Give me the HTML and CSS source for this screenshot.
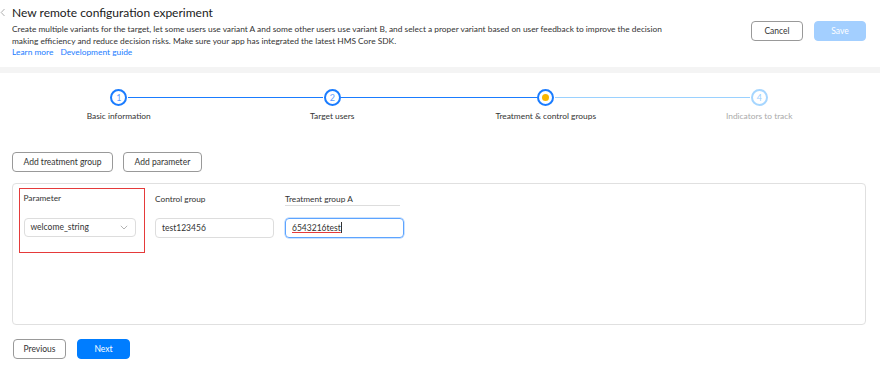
FILE: index.html
```html
<!DOCTYPE html>
<html lang="en">
<head>
  <meta charset="UTF-8">
  <meta name="viewport" content="width=device-width, initial-scale=1.0">
  <title>New remote configuration experiment</title>

  <!-- Styles -->
  <link rel="stylesheet" href="styles.css">

</head>

<body>

<!-- Page header -->
<header class="head">
  <div class="head-text">
    <h1 class="title">
      <span class="back">
        <svg width="6" height="9" viewBox="0 0 6 9"><path d="M4.5 1 L1.2 4.5 L4.5 8" fill="none" stroke="#b0b0b0" stroke-width="1"/></svg>
      </span>New remote configuration experiment
    </h1>
    <p class="desc">Create multiple variants for the target, let some users use variant A and some other users use variant B, and select a proper variant based on user feedback to improve the decision making efficiency and reduce decision risks. Make sure your app has integrated the latest HMS Core SDK.</p>
    <div class="links">
      <a href="#">Learn more</a>
      <a href="#">Development guide</a>
    </div>
  </div>
  <div class="head-actions">
    <button class="btn">Cancel</button>
    <button class="btn btn-primary btn-disabled">Save</button>
  </div>
</header>

<div class="band"></div>

<div class="content">

  <!-- Steps -->
  <ol class="steps">
    <li class="step done">
      <span class="dot">1</span>
      <span class="step-label">Basic information</span>
    </li>
    <li class="step done">
      <span class="dot">2</span>
      <span class="step-label">Target users</span>
    </li>
    <li class="step current">
      <span class="dot"><i class="dot-inner"></i></span>
      <span class="step-label">Treatment &amp; control groups</span>
    </li>
    <li class="step todo">
      <span class="dot">4</span>
      <span class="step-label">Indicators to track</span>
    </li>
  </ol>

  <!-- Toolbar -->
  <div class="toolbar">
    <button class="btn btn-tool">Add treatment group</button>
    <button class="btn btn-tool">Add parameter</button>
  </div>

  <!-- Groups table -->
  <div class="card">
    <div class="col col-param">
      <div class="col-label">Parameter</div>
      <div class="field select">
        <span>welcome_string</span>
        <svg width="8" height="5" viewBox="0 0 8 5"><path d="M0.8 0.8 L4 4 L7.2 0.8" fill="none" stroke="#aaa" stroke-width="0.9"/></svg>
      </div>
    </div>
    <div class="col col-group">
      <div class="col-label">Control group</div>
      <div class="field">test123456</div>
    </div>
    <div class="col col-group">
      <div class="col-label col-label-edit">Treatment group A</div>
      <div class="field field-focus"><span class="typo">6543216test</span><i class="caret"></i></div>
    </div>
  </div>

  <!-- Footer -->
  <div class="footer">
    <button class="btn btn-foot">Previous</button>
    <button class="btn btn-foot btn-primary">Next</button>
  </div>

</div>

</body>
</html>
```

FILE: styles.css
```css
body {
  margin: 0;
  font-family: Lato, "Noto Sans", sans-serif;
  color: #333;
  background: #fff;
}

/* Header */
.head {
  display: flex;
  justify-content: space-between;
  align-items: flex-start;
  padding: 0 14px 0 12px;
  height: 67px;
}

.title {
  margin: 5px 0 0;
  font-size: 12px;
  font-weight: normal;
  line-height: 16px;
  color: #1a1a1a;
}

.back {
  display: inline-block;
  width: 12px;
  margin-left: -12px;
}

.desc {
  margin: 1.5px 0 0;
  max-width: 656px;
  font-size: 8.35px;
  line-height: 12px;
  color: #333;
}

.links {
  display: flex;
  gap: 7px;
  font-size: 8.4px;
  line-height: 10px;
}

.links a {
  color: #1a7cff;
  text-decoration: none;
}

.head-actions {
  display: flex;
  gap: 11px;
  margin-top: 21px;
}

.band {
  height: 6px;
  background: #f4f4f4;
}

.content {
  padding: 0 14px 0 12px;
}

/* Buttons */
.btn {
  height: 20px;
  width: 52px;
  padding: 0;
  font-family: inherit;
  font-size: 8.5px;
  color: #333;
  background: #fff;
  border: 1px solid #999;
  border-radius: 4px;
}

.btn-primary {
  color: #fff;
  background: #007dff;
  border-color: #007dff;
}

.btn-disabled {
  background: #a3cfff;
  border-color: #a3cfff;
}

/* Steps */
.steps {
  display: grid;
  grid-template-columns: repeat(4, 1fr);
  margin: 0;
  padding: 16px 0 0;
  list-style: none;
}

.step {
  position: relative;
  display: flex;
  flex-direction: column;
  align-items: center;
}

.step:not(:last-child)::after {
  content: "";
  position: absolute;
  top: 7.5px;
  left: calc(50% + 9px);
  width: calc(100% - 18px);
  height: 1.5px;
  background: #1a7cff;
}

.step.current::after {
  background: #9ad1ff;
}

.dot {
  display: flex;
  align-items: center;
  justify-content: center;
  box-sizing: border-box;
  width: 17px;
  height: 17px;
  border: 2px solid #1a7cff;
  border-radius: 50%;
  font-size: 9px;
  line-height: 1;
  color: #5b9bff;
}

.dot-inner {
  width: 7px;
  height: 7px;
  border-radius: 50%;
  background: #f9b600;
}

.todo .dot {
  border-color: #a6d6ff;
  color: #9ccfff;
}

.step-label {
  margin-top: 4px;
  font-size: 8.4px;
  line-height: 12px;
  color: #333;
}

.todo .step-label {
  color: #aaa;
}

/* Toolbar */
.toolbar {
  display: flex;
  gap: 10px;
  margin-top: 30px;
}

.btn-tool {
  width: auto;
  padding: 0 10.5px;
}

/* Card */
.card {
  display: flex;
  align-items: flex-start;
  height: 142px;
  box-sizing: border-box;
  margin-top: 11px;
  padding: 4px 6px;
  border: 1px solid #e0e0e0;
  border-radius: 4px;
}

.col {
  box-sizing: border-box;
  padding-top: 4.5px;
}

.col-param {
  width: 126px;
  padding: 3px 4px 15px 3.5px;
  border: 1.5px solid #e53a3a;
}

.col-group {
  width: 119px;
  margin-left: 10px;
}

.col-group + .col-group {
  margin-left: 11px;
}

.col-label {
  font-size: 8.3px;
  line-height: 12px;
  color: #333;
}

.col-label-edit {
  width: 115px;
  border-bottom: 1px solid #ddd;
}

.col-label + .field {
  margin-top: 13.5px;
}

.col-label-edit + .field {
  margin-top: 12.5px;
}

.field {
  display: flex;
  align-items: center;
  justify-content: space-between;
  box-sizing: border-box;
  height: 19.5px;
  padding: 0 7px 0 6px;
  font-size: 8.5px;
  color: #333;
  border: 1px solid #ddd;
  border-radius: 4px;
}

.select {
  width: 112px;
}

.field-focus {
  justify-content: flex-start;
  border-color: #5da4ff;
  box-shadow: 0 0 0 0.5px #9cc8ff;
}

.typo {
  text-decoration: underline;
  text-decoration-color: #e53a3a;
  text-underline-offset: 1px;
}

.caret {
  width: 1px;
  height: 11px;
  background: #333;
}

/* Footer */
.footer {
  display: flex;
  gap: 11px;
  margin-top: 14px;
  padding-left: 1px;
}

.btn-foot {
  width: 53px;
}
```
